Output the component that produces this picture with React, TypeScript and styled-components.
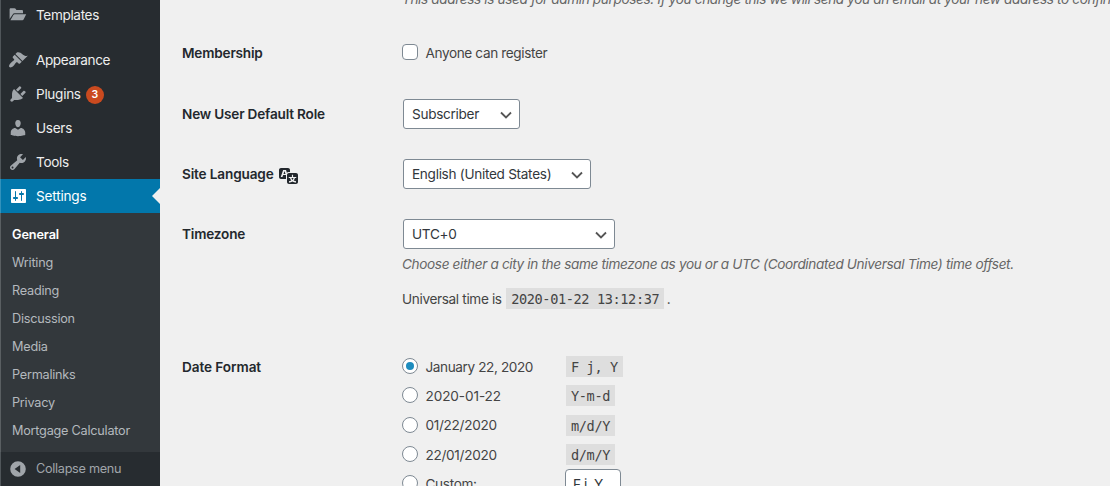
import React from "react";
import styled, { createGlobalStyle, css } from "styled-components";

const GlobalStyle = createGlobalStyle`
  * { box-sizing: border-box; }
  body {
    margin: 0;
    overflow: hidden;
    background: #f0f0f0;
    color: #444;
    font-family: Inter, "Liberation Sans", sans-serif;
    font-size: 13.6px;
  }
`;

const Page = styled.div`
  display: flex;
  height: 486px;
  overflow: hidden;
`;

/* ---------- Sidebar ---------- */

const Sidebar = styled.nav`
  flex: none;
  width: 160px;
  height: 486px;
  overflow: hidden;
  display: flex;
  flex-direction: column;
  background: #272c30;
  box-shadow: inset 1px 0 0 #50565a;
`;

const MenuList = styled.div`
  margin-top: -2px;
`;

const MenuItem = styled.div<{ $active?: boolean; $spaced?: boolean }>`
  position: relative;
  display: flex;
  align-items: center;
  height: 34px;
  padding-left: 8px;
  gap: 8px;
  color: ${(p) => (p.$active ? "#fff" : "#eee")};
  ${(p) => p.$spaced && css`margin-top: 11px;`}
  ${(p) =>
    p.$active &&
    css`
      background: #0277ab;
      box-shadow: inset 1px 0 0 #3292bc;
      &::after {
        content: "";
        position: absolute;
        right: 0;
        top: 9px;
        border: 8px solid transparent;
        border-left-width: 0;
        border-right-color: #f0f0f0;
      }
    `}
`;

const MenuIcon = styled.svg<{ $active?: boolean }>`
  flex: none;
  width: 20px;
  height: 20px;
  fill: ${(p) => (p.$active ? "#fff" : "#a0a5aa")};
`;

const Label = styled.span<{ $tracking?: number }>`
  white-space: nowrap;
  line-height: 20px;
  letter-spacing: ${(p) => p.$tracking ?? -0.3}px;
`;

const Badge = styled.span`
  width: 18px;
  height: 18px;
  margin-left: -3px;
  margin-top: 2px;
  border-radius: 9px;
  background: #ca4a1f;
  color: #fff;
  font-size: 10.5px;
  font-weight: 600;
  line-height: 18px;
  text-align: center;
`;

const SubMenu = styled.div`
  height: 239px;
  padding: 7px 0 8px 12px;
  background: #33383c;
  box-shadow: inset 1px 0 0 #5a5f62;
`;

const SubItem = styled.div<{ $current?: boolean }>`
  height: 28px;
  line-height: 29px;
  font-size: 12.7px;
  white-space: nowrap;
  color: ${(p) => (p.$current ? "#fff" : "#b4b9be")};
  font-weight: ${(p) => (p.$current ? 600 : 400)};
  letter-spacing: ${(p) => (p.$current ? -0.1 : -0.24)}px;
`;

const Collapse = styled.div`
  display: flex;
  align-items: center;
  height: 34px;
  padding-left: 8px;
  gap: 8px;
  font-size: 12.7px;
  color: #a0a5aa;
`;

/* ---------- Settings form ---------- */

const Content = styled.main`
  flex: 1;
  min-width: 0;
  padding-left: 22px;
  overflow: hidden;
`;

const Row = styled.section<{ $height: number }>`
  display: grid;
  grid-template-columns: 220px 1fr;
  height: ${(p) => p.$height}px;
`;

const Heading = styled.div<{ $tracking?: number }>`
  display: flex;
  gap: 5px;
  padding-top: 20px;
  line-height: 20px;
  font-weight: 600;
  color: #23282d;
  white-space: nowrap;
  letter-spacing: ${(p) => p.$tracking ?? -0.19}px;
`;

const Field = styled.div`
  padding-top: 15px;
  min-width: 0;
`;

const Description = styled.p`
  margin: 5px 0 0;
  font-style: italic;
  line-height: 20px;
  color: #666;
  white-space: nowrap;
  letter-spacing: -0.36px;
`;

const EmailNote = styled.div`
  display: flow-root;
  height: 23px;
  padding-left: 220px;
  ${Description} { margin-top: -11px; }
`;

const Option = styled.label`
  display: flex;
  align-items: center;
  height: 30px;
`;

const Checkbox = styled.span`
  width: 16px;
  height: 16px;
  margin: 0 7.5px 2px 0;
  border: 1px solid #7e8993;
  border-radius: 4px;
  background: #fff;
`;

const SelectBox = styled.div<{ $width: number }>`
  display: flex;
  align-items: center;
  justify-content: space-between;
  width: ${(p) => p.$width}px;
  height: 30px;
  margin-left: 1px;
  padding: 0 7px 0 8px;
  border: 1px solid #7e8993;
  border-radius: 3px;
  background: #fff;
  color: #32373c;
  line-height: 28px;
  white-space: nowrap;
  letter-spacing: -0.3px;
`;

const Chevron = styled.svg`
  width: 12px;
  height: 8px;
  margin-top: 1px;
  fill: none;
  stroke: #555;
  stroke-width: 1.8;
`;

const TranslateIcon = styled.svg`
  width: 20px;
  height: 20px;
  margin-top: 1px;
  fill: #23282d;
`;

const Universal = styled.p`
  display: flex;
  align-items: center;
  margin: 14px 0 0;
  height: 21px;
`;

const Code = styled.code`
  display: inline-block;
  height: 21px;
  padding: 0 5px;
  background: #dedede;
  font: 13.6px/22px "DejaVu Sans Mono", monospace;
  letter-spacing: -0.39px;
  color: #444;
  white-space: pre;
  ${Universal} & { margin-left: 1px; }
`;

const FormatList = styled.div`
  padding-top: 19px;
`;

const FormatRow = styled.label`
  display: grid;
  grid-template-columns: 23.5px 140.5px auto;
  grid-template-rows: 21px;
  justify-content: start;
  align-items: center;
  height: 21px;
  margin-bottom: 8.35px;
`;

const Radio = styled.span<{ $checked?: boolean }>`
  display: flex;
  align-items: center;
  justify-content: center;
  width: 16px;
  height: 16px;
  margin-bottom: 1px;
  border: 1px solid #7e8993;
  border-radius: 50%;
  background: #fff;
  &::before {
    content: "";
    width: 8px;
    height: 8px;
    border-radius: 50%;
    background: ${(p) => (p.$checked ? "#1e8cbe" : "transparent")};
  }
`;

const FormatInput = styled.div`
  width: 56px;
  height: 30px;
  margin-left: -1px;
  padding-left: 7px;
  border: 1px solid #7e8993;
  border-radius: 4px;
  background: #fff;
  color: #32373c;
  line-height: 28px;
  letter-spacing: -0.4px;
`;

const paths = {
  templates:
    "M1.6 14V4.4c0-.7.5-1.2 1.2-1.2h3.7c.5 0 .8.2 1.1.6l.8 1.2h5.4c.7 0 1.2.5 1.2 1.2v2.1H6.6c-.9 0-1.5.4-1.9 1.1zM2.4 15.2l3-5.1c.3-.5.7-.8 1.2-.8H18.2l-2.6 5.1c-.3.5-.7.8-1.2.8z",
  appearance:
    "M14.48 11.06L7.41 3.99l1.5-1.5c.5-.56 2.3-.47 3.51.32 1.21.8 1.43 1.28 2.91 2.1 1.18.64 2.45 1.26 4.45.85zm-.71.71L6.7 4.7 4.93 6.47c-.39.39-.39 1.02 0 1.41l1.06 1.06c.39.39.39 1.03 0 1.42-.6.6-1.43 1.11-2.21 1.69-.35.26-.7.53-1.01.84C1.43 14.23.4 16.08 1.4 17.07c.99 1 2.84-.03 4.18-1.36.31-.31.58-.66.85-1.02.57-.78 1.08-1.61 1.69-2.21.39-.39 1.02-.39 1.41 0l1.06 1.06c.39.39 1.02.39 1.41 0z",
  plugins:
    "M13.11 4.36L9.87 7.6 8 5.73l3.24-3.24c.35-.34 1.05-.2 1.56.32.52.51.66 1.21.31 1.55zm-8 1.77l.91-1.12 9.01 9.01-1.19.84c-.71.71-2.63 1.16-3.82 1.16H6.14L4.9 17.26c-.59.59-1.54.59-2.12 0-.59-.58-.59-1.53 0-2.12l1.24-1.24v-3.88c0-1.13.4-3.19 1.09-3.89zm7.26 3.97l3.24-3.24c.34-.35 1.04-.21 1.55.31.52.51.66 1.21.31 1.55l-3.24 3.25z",
  users:
    "M10 9.25c-2.27 0-2.73-3.44-2.73-3.44C7 4.02 7.82 2 9.97 2c2.16 0 2.98 2.02 2.71 3.81 0 0-.41 3.44-2.68 3.44zm0 2.57L12.72 10c2.39 0 4.52 2.33 4.52 4.53v2.49s-3.65 1.13-7.24 1.13c-3.65 0-7.24-1.13-7.24-1.13v-2.49c0-2.25 1.94-4.48 4.47-4.48z",
  tools:
    "M16.68 9.77c-1.34 1.34-3.3 1.67-4.95.99l-5.41 6.52c-.99.99-2.59.99-3.58 0s-.99-2.59 0-3.57l6.52-5.42c-.68-1.65-.35-3.61.99-4.95 1.28-1.28 3.12-1.62 4.72-1.06l-2.89 2.89 2.82 2.82 2.86-2.87c.53 1.58.18 3.39-1.08 4.65zM3.81 16.21c.4.39 1.04.39 1.43 0 .4-.4.4-1.04 0-1.43-.39-.4-1.03-.4-1.43 0-.39.39-.39 1.03 0 1.43z",
  settings:
    "M18 16V4c0-.55-.45-1-1-1H4c-.55 0-1 .45-1 1v12c0 .55.45 1 1 1h13c.55 0 1-.45 1-1zM8 11h1c.55 0 1 .45 1 1s-.45 1-1 1H8v1.5c0 .28-.22.5-.5.5s-.5-.22-.5-.5V13H6c-.55 0-1-.45-1-1s.45-1 1-1h1V5.5c0-.28.22-.5.5-.5s.5.22.5.5V11zm5-2h-1c-.55 0-1-.45-1-1s.45-1 1-1h1V5.5c0-.28.22-.5.5-.5s.5.22.5.5V7h1c.55 0 1 .45 1 1s-.45 1-1 1h-1v5.5c0 .28-.22.5-.5.5s-.5-.22-.5-.5V9z",
  collapse:
    "M10 2.2a7.8 7.8 0 1 0 0 15.6 7.8 7.8 0 0 0 0-15.6zM12.2 6v8L6.6 10z",
  translate:
    "M11 7H9.49c-.63 0-1.25.3-1.59.7L7 5H4.13l-2.39 7h1.69l.74-2H7v4H2c-1.1 0-2-.9-2-2V5c0-1.1.9-2 2-2h7c1.1 0 2 .9 2 2v2zM6.51 9H4.49l1-2.93zM10 8h7c1.1 0 2 .9 2 2v7c0 1.1-.9 2-2 2h-7c-1.1 0-2-.9-2-2v-7c0-1.1.9-2 2-2zm7.25 5v-1.08h-3.17V9.75h-1.16v2.17H9.75V13h1.28c.11.85.56 1.85 1.28 2.62-.87.36-1.89.62-2.31.62-.01.02.22.97.2 1.46.84 0 2.21-.5 3.28-1.15 1.09.65 2.48 1.15 3.34 1.15-.02-.49.2-1.44.2-1.46-.43 0-1.49-.27-2.38-.63.7-.77 1.14-1.77 1.25-2.61h1.36zm-3.81 1.93c-.5-.46-.85-1.13-1.01-1.93h2.09c-.17.8-.51 1.47-1 1.93l-.04.03s-.03-.02-.04-.03z",
};

type MenuEntry = {
  name: string;
  icon: keyof typeof paths;
  tracking?: number;
  spaced?: boolean;
  active?: boolean;
  count?: number;
};

const menu: MenuEntry[] = [
  { name: "Templates", icon: "templates", tracking: -0.36 },
  { name: "Appearance", icon: "appearance", spaced: true, tracking: -0.42 },
  { name: "Plugins", icon: "plugins", count: 3 },
  { name: "Users", icon: "users" },
  { name: "Tools", icon: "tools", tracking: -0.3 },
  { name: "Settings", icon: "settings", active: true, tracking: -0.2 },
];

const submenu = [
  "General",
  "Writing",
  "Reading",
  "Discussion",
  "Media",
  "Permalinks",
  "Privacy",
  "Mortgage Calculator",
];

const formats = [
  { label: "January 22, 2020", code: "F j, Y", tracking: -0.4 },
  { label: "2020-01-22", code: "Y-m-d", tracking: -0.1 },
  { label: "01/22/2020", code: "m/d/Y", tracking: -0.3 },
  { label: "22/01/2020", code: "d/m/Y", tracking: -0.3 },
];

const Select = ({ width, children }: { width: number; children: string }) => (
  <SelectBox $width={width}>
    {children}
    <Chevron viewBox="0 0 12 8">
      <path d="M1 1.5l5 5 5-5" />
    </Chevron>
  </SelectBox>
);

export default function App() {
  return (
    <Page>
      <GlobalStyle />
      <Sidebar>
        <MenuList>
          {menu.map((m) => (
            <MenuItem key={m.name} $active={m.active} $spaced={m.spaced}>
              <MenuIcon $active={m.active} viewBox="0 0 20 20">
                <path d={paths[m.icon]} fillRule="evenodd" />
              </MenuIcon>
              <Label $tracking={m.tracking}>{m.name}</Label>
              {m.count && <Badge>{m.count}</Badge>}
            </MenuItem>
          ))}
        </MenuList>
        <SubMenu>
          {submenu.map((name, i) => (
            <SubItem key={name} $current={i === 0}>
              {name}
            </SubItem>
          ))}
        </SubMenu>
        <Collapse>
          <MenuIcon viewBox="0 0 20 20">
            <path d={paths.collapse} fillRule="evenodd" />
          </MenuIcon>
          <Label>Collapse menu</Label>
        </Collapse>
      </Sidebar>

      <Content>
        <EmailNote>
          <Description>
            This address is used for admin purposes. If you change this we will send you an email at your new address to confirm it.
          </Description>
        </EmailNote>
        <Row $height={61}>
          <Heading>Membership</Heading>
          <Field>
            <Option>
              <Checkbox />
              <Label $tracking={-0.38}>Anyone can register</Label>
            </Option>
          </Field>
        </Row>
        <Row $height={60}>
          <Heading>New User Default Role</Heading>
          <Field>
            <Select width={117}>Subscriber</Select>
          </Field>
        </Row>
        <Row $height={60}>
          <Heading $tracking={-0.15}>
            Site Language
            <TranslateIcon viewBox="0 0 20 20">
              <path d={paths.translate} fillRule="evenodd" />
            </TranslateIcon>
          </Heading>
          <Field>
            <Select width={188}>English (United States)</Select>
          </Field>
        </Row>
        <Row $height={133}>
          <Heading>Timezone</Heading>
          <Field>
            <Select width={212}>UTC+0</Select>
            <Description>
              Choose either a city in the same timezone as you or a UTC (Coordinated Universal Time) time offset.
            </Description>
            <Universal>
              <Label $tracking={-0.35}>Universal time is&nbsp;</Label>
              <Code>2020-01-22 13:12:37</Code>
              <Label $tracking={-1.4}>&nbsp;.</Label>
            </Universal>
          </Field>
        </Row>
        <Row $height={149}>
          <Heading $tracking={-0.08}>Date Format</Heading>
          <FormatList>
            {formats.map((f, i) => (
              <FormatRow key={f.code}>
                <Radio $checked={i === 0} />
                <Label $tracking={f.tracking}>{f.label}</Label>
                <Code>{f.code}</Code>
              </FormatRow>
            ))}
            <FormatRow>
              <Radio />
              <Label $tracking={-0.33}>Custom:</Label>
              <FormatInput>F j, Y</FormatInput>
            </FormatRow>
          </FormatList>
        </Row>
      </Content>
    </Page>
  );
}
